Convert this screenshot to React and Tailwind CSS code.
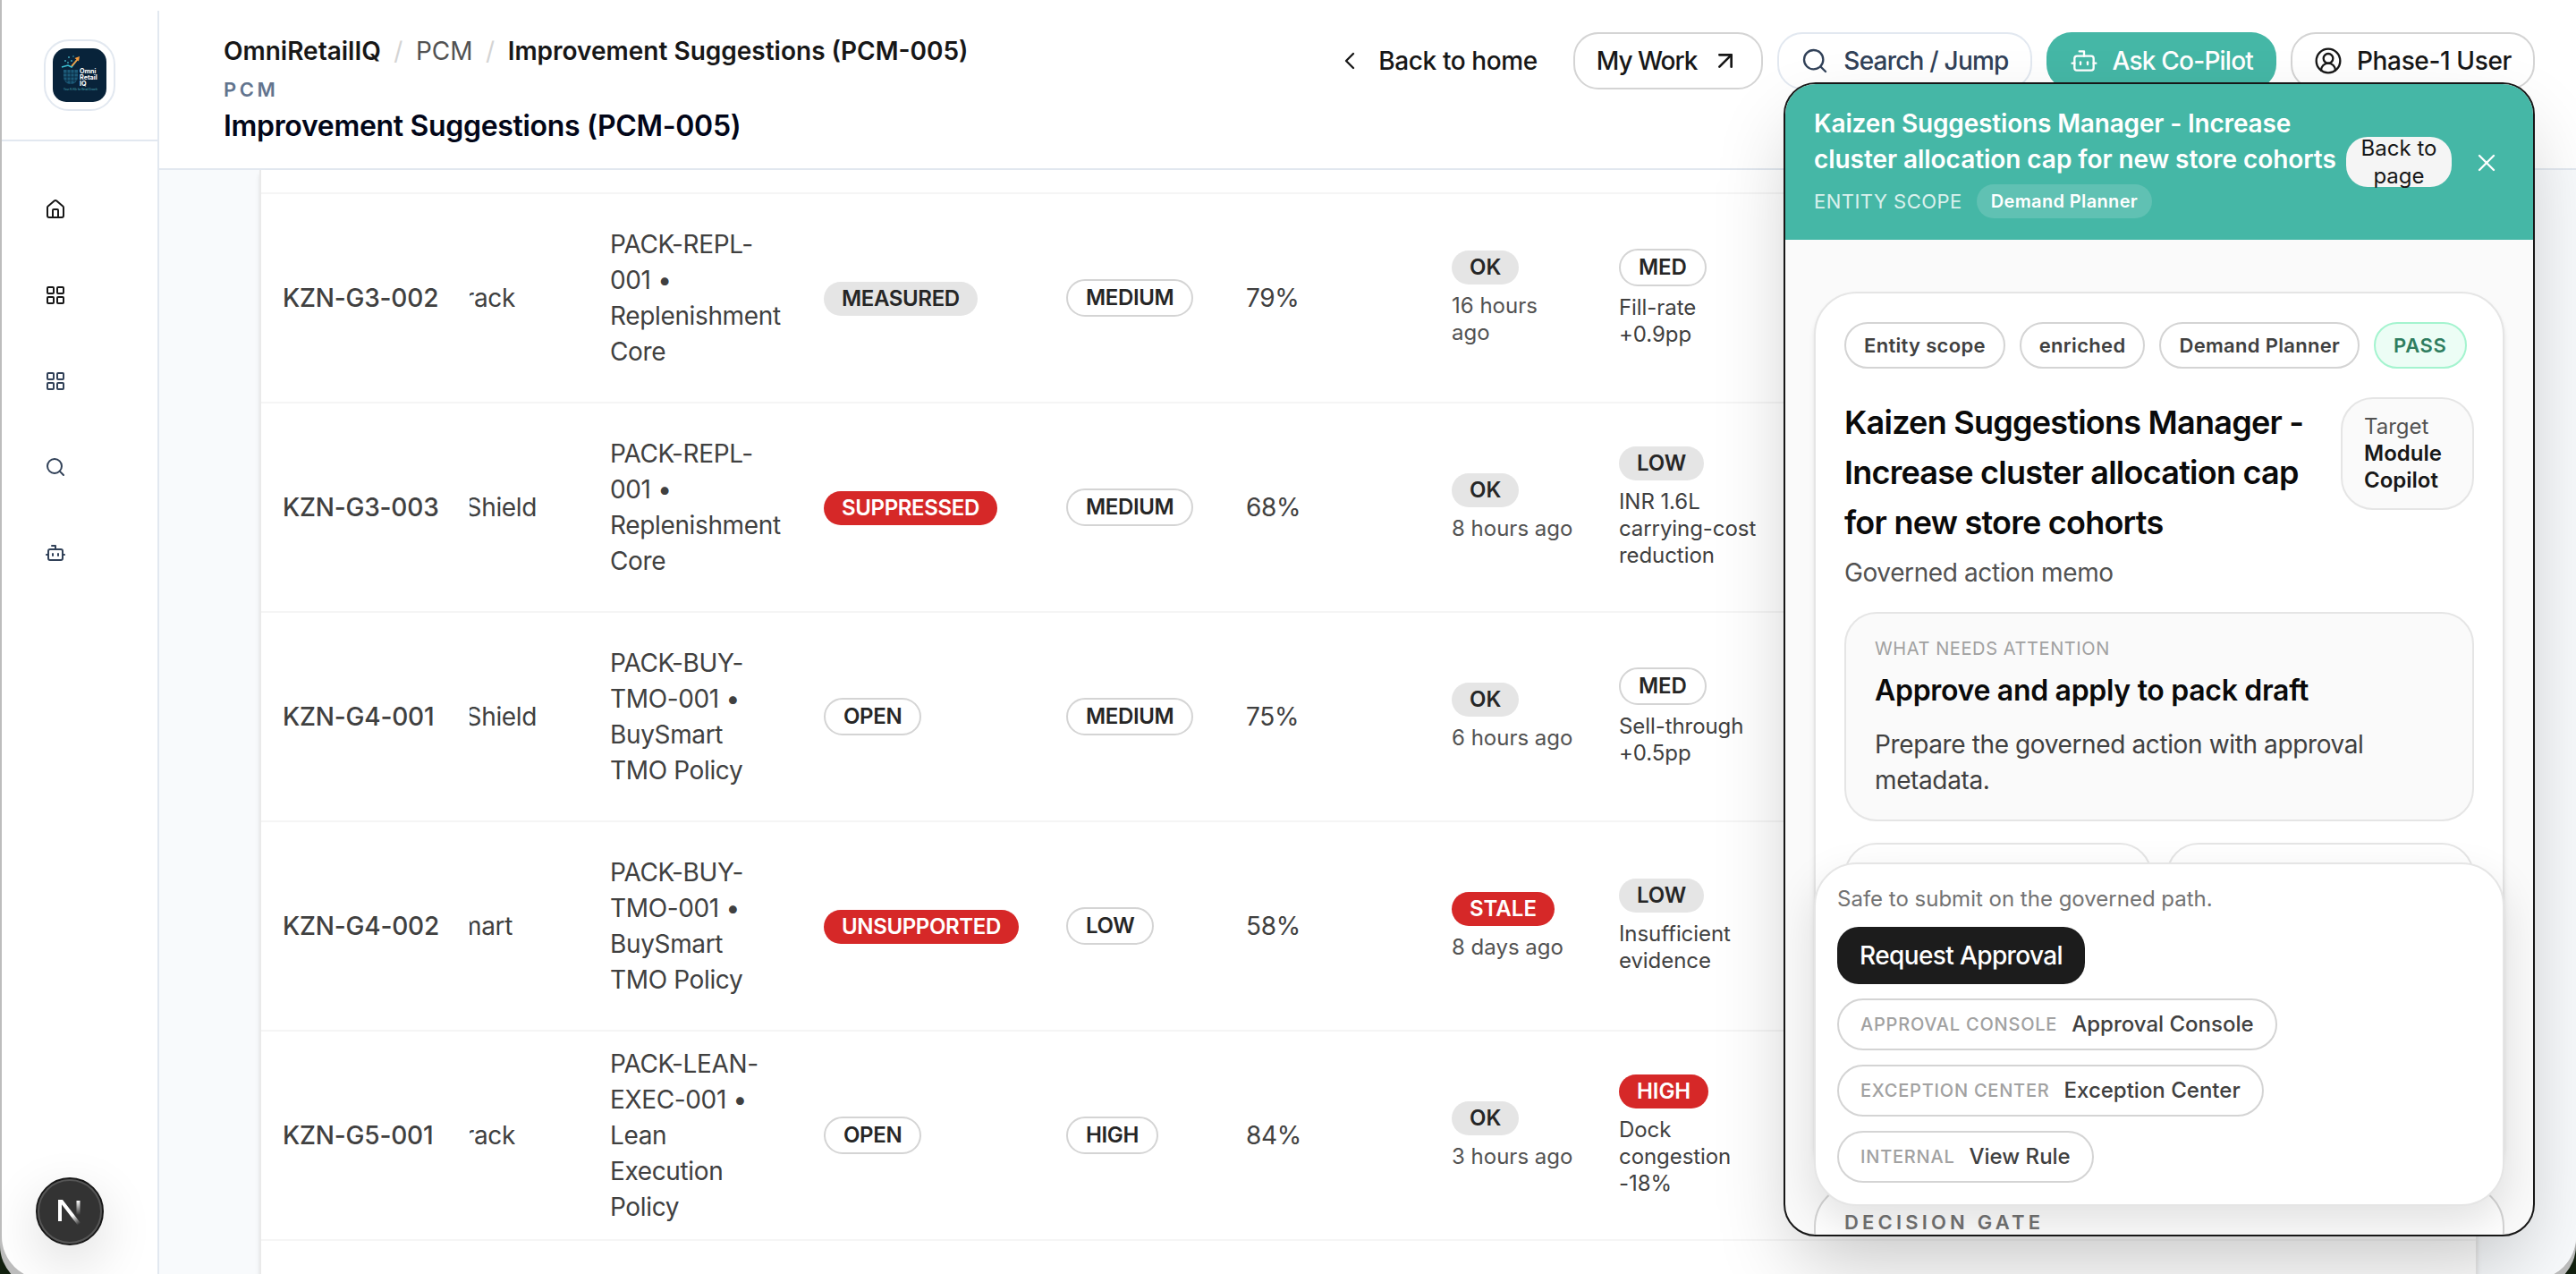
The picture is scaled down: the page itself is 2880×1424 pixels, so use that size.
import { ArrowUpRight, Bot, ChevronLeft, CircleUserRound, House, LayoutGrid, Search, X } from 'lucide-react';

const navItems = [
  { label: 'Home', icon: House, color: 'text-neutral-900' },
  { label: 'Workspace', icon: LayoutGrid, color: 'text-neutral-900' },
  { label: 'Modules', icon: LayoutGrid, color: 'text-slate-700' },
  { label: 'Search', icon: Search, color: 'text-slate-700' },
  { label: 'Copilot', icon: Bot, color: 'text-slate-700' },
];

const rows = [
  {
    id: 'KZN-G3-002',
    agent: 'Track',
    agentWidth: 'w-[51px]',
    pack: ['PACK-REPL-', '001 •', 'Replenishment', 'Core'],
    status: 'MEASURED',
    statusTone: 'muted',
    priority: 'MEDIUM',
    confidence: '79%',
    fresh: 'OK',
    freshTone: 'muted',
    age: ['16 hours', 'ago'],
    impact: 'MED',
    impactTone: 'outline',
    impactText: ['Fill-rate', '+0.9pp'],
  },
  {
    id: 'KZN-G3-003',
    agent: 'Shield',
    agentWidth: 'w-[75px]',
    pack: ['PACK-REPL-', '001 •', 'Replenishment', 'Core'],
    status: 'SUPPRESSED',
    statusTone: 'danger',
    priority: 'MEDIUM',
    confidence: '68%',
    fresh: 'OK',
    freshTone: 'muted',
    age: ['8 hours ago'],
    impact: 'LOW',
    impactTone: 'muted',
    impactText: ['INR 1.6L', 'carrying-cost', 'reduction'],
  },
  {
    id: 'KZN-G4-001',
    agent: 'Shield',
    agentWidth: 'w-[75px]',
    pack: ['PACK-BUY-', 'TMO-001 •', 'BuySmart', 'TMO Policy'],
    status: 'OPEN',
    statusTone: 'outline',
    priority: 'MEDIUM',
    confidence: '75%',
    fresh: 'OK',
    freshTone: 'muted',
    age: ['6 hours ago'],
    impact: 'MED',
    impactTone: 'outline',
    impactText: ['Sell-through', '+0.5pp'],
  },
  {
    id: 'KZN-G4-002',
    agent: 'Smart',
    agentWidth: 'w-[48px]',
    pack: ['PACK-BUY-', 'TMO-001 •', 'BuySmart', 'TMO Policy'],
    status: 'UNSUPPORTED',
    statusTone: 'danger',
    priority: 'LOW',
    confidence: '58%',
    fresh: 'STALE',
    freshTone: 'danger',
    age: ['8 days ago'],
    impact: 'LOW',
    impactTone: 'muted',
    impactText: ['Insufficient', 'evidence'],
  },
  {
    id: 'KZN-G5-001',
    agent: 'Track',
    agentWidth: 'w-[51px]',
    pack: ['PACK-LEAN-', 'EXEC-001 •', 'Lean', 'Execution', 'Policy'],
    status: 'OPEN',
    statusTone: 'outline',
    priority: 'HIGH',
    confidence: '84%',
    fresh: 'OK',
    freshTone: 'muted',
    age: ['3 hours ago'],
    impact: 'HIGH',
    impactTone: 'danger',
    impactText: ['Dock', 'congestion', '-18%'],
  },
];

const links = [
  { kind: 'APPROVAL CONSOLE', name: 'Approval Console' },
  { kind: 'EXCEPTION CENTER', name: 'Exception Center' },
  { kind: 'INTERNAL', name: 'View Rule' },
];

const tones = {
  muted: 'h-[38px] bg-[#e5e5e5] px-5 text-neutral-800',
  danger: 'h-[38px] bg-[#d62828] px-5 text-white',
  outline: 'h-[42px] border-2 border-neutral-300 px-5 text-neutral-800',
};

function Badge({ tone, children }) {
  return (
    <span className={`inline-flex w-fit items-center rounded-full text-[24px] font-semibold leading-none ${tones[tone]}`}>
      {children}
    </span>
  );
}

function Lines({ items }) {
  return items.map((item) => (
    <span key={item} className="block whitespace-nowrap">{item}</span>
  ));
}

function Logo() {
  return (
    <div className="flex h-20 w-20 items-center justify-center rounded-[28px] border-2 border-slate-200 bg-white">
      <svg viewBox="0 0 60 60" className="h-[60px] w-[60px] shrink-0">
        <rect width="60" height="60" rx="15" fill="#08233a" />
        <path d="M12 24v8a8 8 0 0 0 16 0v-8z" fill="#1c5a78" />
        <path d="M12 28h16M12 32h16M13 36h14M16 24v14M20 24v16M24 24v14" stroke="#0b2c44" strokeWidth="1" />
        <path d="M10 21l7-2 4 2 6-8" fill="none" stroke="#3cc3d6" strokeWidth="1.6" />
        <path d="M21 20l7-8" stroke="#f59a3c" strokeWidth="1.8" />
        <path d="M24.500 11l5.500-2-1 5.500z" fill="#f59a3c" />
        <g fill="#3fa9bd">
          <circle cx="14" cy="14" r="1" />
          <circle cx="18" cy="10" r="1" />
          <circle cx="21" cy="14" r="1" />
          <circle cx="17" cy="16" r="0.9" />
          <circle cx="23" cy="9" r="0.8" />
        </g>
        <g fill="#ffffff" fontFamily="Inter, sans-serif" fontSize="7.2" fontWeight="700">
          <text x="30" y="27.5">Omni</text>
          <text x="30" y="34.8">Retail</text>
          <text x="30" y="42.2">IQ</text>
        </g>
        <text x="12" y="47" fill="#4fb0bd" fontFamily="Inter, sans-serif" fontSize="2.9" textLength="38">Your AI Ally for Retail Growth</text>
      </svg>
    </div>
  );
}

function Sidebar() {
  return (
    <aside className="flex w-[176px] shrink-0 flex-col pt-3">
      <div className="flex flex-1 flex-col border-r-2 border-slate-200">
        <div className="flex h-[146px] items-center border-b-2 border-slate-200 pl-[47px]">
          <Logo />
        </div>
        <nav className="flex flex-col gap-[72px] pl-12 pt-16">
          {navItems.map(({ label, icon: Icon, color }) => (
            <a key={label} aria-label={label} className={`h-6 w-6 ${color}`}>
              <Icon size={24} strokeWidth={2} />
            </a>
          ))}
        </nav>
      </div>
    </aside>
  );
}

function Header() {
  return (
    <header className="flex h-[190px] shrink-0 items-start justify-between border-b-2 border-slate-200 bg-white pl-[72px] pr-[46px]">
      <div className="flex flex-col pt-9">
        <div className="flex h-[42px] items-center gap-[14.5px] whitespace-nowrap text-[28px] leading-10">
          <span className="font-semibold text-neutral-900">OmniRetailIQ</span>
          <span className="text-neutral-300">/</span>
          <span className="text-neutral-600">PCM</span>
          <span className="text-neutral-300">/</span>
          <span className="font-semibold text-neutral-900">Improvement Suggestions (PCM-005)</span>
        </div>
        <span className="mt-[6px] text-[22px] font-semibold leading-8 tracking-[0.16em] text-slate-500">PCM</span>
        <h1 className="mt-px text-[32px] font-semibold leading-[48px] tracking-[-0.01em] text-slate-950">
          Improvement Suggestions (PCM-005)
        </h1>
      </div>
      <div className="flex gap-4 whitespace-nowrap pt-9 text-[28px] font-medium">
        <button className="flex h-16 items-center gap-4 pl-[26px] pr-6 tracking-[-0.0145em] text-neutral-900">
          <ChevronLeft size={32} strokeWidth={1.75} />
          Back to home
        </button>
        <button className="flex h-16 items-center gap-4 rounded-[28px] border-2 border-neutral-300 px-6 tracking-[-0.037em] text-neutral-900">
          My Work
          <ArrowUpRight size={32} strokeWidth={2} />
        </button>
        <button className="flex h-16 items-center gap-4 rounded-[28px] border-2 border-slate-200 px-6 tracking-[-0.028em] text-slate-700">
          <Search size={32} strokeWidth={1.75} />
          Search / Jump
        </button>
        <button className="flex h-16 items-center gap-4 rounded-[28px] bg-[#45b7a6] px-[26px] tracking-[-0.028em] text-white">
          <Bot size={32} strokeWidth={1.75} />
          Ask Co-Pilot
        </button>
        <button className="flex h-16 items-center gap-4 rounded-[28px] border-2 border-neutral-300 px-6 tracking-[-0.013em] text-neutral-900">
          <CircleUserRound size={32} strokeWidth={1.75} />
          Phase-1 User
        </button>
      </div>
    </header>
  );
}

function Row({ row }) {
  return (
    <div className="grid h-[234px] shrink-0 grid-cols-[232px_134px_239px_271px_201px_230px_187px_1fr] items-center border-b-2 border-neutral-100 pl-6 text-[28px] leading-10 tracking-[-0.0128em] text-neutral-700">
      <div className="w-[208px] font-medium tracking-[-0.007em]">{row.id}</div>
      <div className="-ml-[23px] h-10">
        <div className={`flex h-10 justify-end overflow-hidden ${row.agentWidth}`}>
          <span>{row.agent}</span>
        </div>
      </div>
      <div><Lines items={row.pack} /></div>
      <div className={row.statusTone === 'outline' ? 'flex' : 'flex pt-[2px]'}>
        <Badge tone={row.statusTone}>{row.status}</Badge>
      </div>
      <div className="flex"><Badge tone="outline">{row.priority}</Badge></div>
      <div>{row.confidence}</div>
      <div className="flex flex-col gap-[9px] text-[24px] leading-[30px] tracking-normal text-neutral-600">
        <Badge tone={row.freshTone}>{row.fresh}</Badge>
        <div><Lines items={row.age} /></div>
      </div>
      <div className="flex flex-col gap-[9px] text-[24px] leading-[30px] tracking-[-0.003em]">
        <Badge tone={row.impactTone}>{row.impact}</Badge>
        <div><Lines items={row.impactText} /></div>
      </div>
    </div>
  );
}

function Pill({ children, className = 'border-neutral-300 tracking-[0.014em] text-neutral-700' }) {
  return (
    <span className={`flex h-[52px] items-center whitespace-nowrap rounded-[26px] border-2 px-5 text-[22px] font-semibold ${className}`}>
      {children}
    </span>
  );
}

function CopilotPanel() {
  return (
    <section className="absolute left-[1994px] top-[92px] flex h-[1290px] w-[840px] flex-col overflow-hidden rounded-[36px] border-2 border-neutral-900 bg-neutral-50 shadow-[0_40px_90px_-16px_rgba(0,0,0,0.24)]">
      <div className="flex h-[174px] shrink-0 items-start bg-[#45b7a6] pl-8 pt-6 text-white">
        <div className="w-[595px] shrink-0">
          <h2 className="whitespace-nowrap text-[28px] font-semibold leading-10">
            <span className="block tracking-[-0.006em]">Kaizen Suggestions Manager - Increase</span>
            <span className="block tracking-[-0.002em]">cluster allocation cap for new store cohorts</span>
          </h2>
          <div className="mt-2 flex items-center gap-4">
            <span className="text-[22px] tracking-[0.022em] text-white/80">ENTITY SCOPE</span>
            <span className="flex h-[38px] items-center rounded-full bg-white/15 px-4 text-[20px] font-semibold tracking-[0.018em]">Demand Planner</span>
          </div>
        </div>
        <button className="mt-[35px] flex h-14 w-[118px] shrink-0 items-center justify-center rounded-[24px] bg-neutral-100 text-center text-[24px] leading-[31px] text-neutral-900">
          Back to
          <br />
          page
        </button>
        <button aria-label="Close" className="ml-[23px] mt-12">
          <X size={32} strokeWidth={1.75} />
        </button>
      </div>

      <div className="flex flex-col px-8 pt-[58px]">
        <div className="h-[1000px] shrink-0 rounded-[48px] border-2 border-neutral-200 bg-white px-8 pt-8 shadow-md">
          <div className="flex gap-4">
            <Pill>Entity scope</Pill>
            <Pill>enriched</Pill>
            <Pill>Demand Planner</Pill>
            <Pill className="border-emerald-200 bg-emerald-50 tracking-[0.03em] text-[#2f7d5f]">PASS</Pill>
          </div>
          <div className="mt-8 flex items-start justify-between">
            <div>
              <h3 className="whitespace-nowrap text-[36px] font-semibold leading-[56px] tracking-[-0.021em] text-neutral-950">
                Kaizen Suggestions Manager -
                <br />
                Increase cluster allocation cap
                <br />
                for new store cohorts
              </h3>
              <p className="mt-2 text-[28px] leading-10 tracking-[-0.014em] text-neutral-600">Governed action memo</p>
            </div>
            <div className="w-[149px] rounded-[36px] border-2 border-neutral-200 bg-neutral-50 px-6 py-4 text-[24px] leading-[30px] text-neutral-600">
              Target
              <div className="font-semibold text-neutral-900">
                Module
                <br />
                Copilot
              </div>
            </div>
          </div>
          <div className="mt-6 h-[234px] rounded-[36px] border-2 border-neutral-200 bg-neutral-50 px-8 py-6">
            <div className="text-[20px] leading-[30px] tracking-[0.03em] text-neutral-400">WHAT NEEDS ATTENTION</div>
            <div className="mt-2 text-[32px] font-semibold leading-[48px] tracking-[-0.0095em] text-neutral-950">
              Approve and apply to pack draft
            </div>
            <p className="mt-4 text-[28px] leading-10 tracking-[-0.0135em] text-neutral-700">
              Prepare the governed action with approval
              <br />
              metadata.
            </p>
          </div>
          <div className="mt-6 grid grid-cols-2 gap-4">
            <div className="h-[160px] rounded-[36px] border-2 border-neutral-200" />
            <div className="h-[160px] rounded-[36px] border-2 border-neutral-200" />
          </div>
        </div>
      </div>

      {/* decision gate card peeks out under the action bar */}
      <div className="absolute left-8 top-[1229px] flex h-[100px] w-[772px] items-start rounded-[48px] border-2 border-neutral-300 bg-white pl-8 pt-[25px]">
        <span className="text-[22px] font-semibold leading-8 tracking-[0.19em] text-neutral-500">DECISION GATE</span>
      </div>

      <div className="absolute left-8 top-[870px] flex h-[384px] w-[772px] flex-col items-start gap-4 rounded-[48px] border-2 border-neutral-200 bg-white px-6 pt-6 shadow-[0_20px_50px_rgba(0,0,0,0.12)]">
        <p className="text-[24px] leading-[30px] text-neutral-500">Safe to submit on the governed path.</p>
        <button className="flex h-16 items-center rounded-[24px] bg-[#1c1c1c] px-[25px] text-[28px] font-medium tracking-[-0.022em] text-white">
          Request Approval
        </button>
        {links.map((link) => (
          <a key={link.kind} className="flex h-[58px] items-center gap-4 rounded-[29px] border-2 border-neutral-300 bg-white px-6 font-medium">
            <span className="text-[20px] tracking-[0.039em] text-neutral-400">{link.kind}</span>
            <span className="text-[24px] text-neutral-700">{link.name}</span>
          </a>
        ))}
      </div>
    </section>
  );
}

function DevBadge() {
  return (
    <div className="absolute left-[40px] top-[1316px] flex h-[76px] w-[76px] items-center justify-center rounded-full border-2 border-neutral-900 bg-[#333] shadow-[0_20px_60px_rgba(0,0,0,0.14)]">
      <div className="flex h-[72px] w-[72px] shrink-0 items-center justify-center rounded-full border-2 border-[#555]">
        <svg viewBox="0 0 48 48" className="h-12 w-12 shrink-0" fill="none">
          <defs>
            <linearGradient id="stem" x1="33.500" y1="12" x2="33.500" y2="28" gradientUnits="userSpaceOnUse">
              <stop stopColor="#fff" />
              <stop offset="1" stopColor="#fff" stopOpacity="0" />
            </linearGradient>
            <linearGradient id="slash" x1="28" y1="28" x2="35" y2="38" gradientUnits="userSpaceOnUse">
              <stop stopColor="#fff" />
              <stop offset="1" stopColor="#fff" stopOpacity="0" />
            </linearGradient>
          </defs>
          <path d="M13 35V13h2l20 26" stroke="url(#slash)" strokeWidth="4" />
          <path d="M33.500 12v16" stroke="url(#stem)" strokeWidth="4" />
        </svg>
      </div>
    </div>
  );
}

export default function App() {
  return (
    <div className="relative h-[1424px] w-[2880px] overflow-hidden bg-[#12200f] font-['Inter',sans-serif]">
      <div className="h-[1440px] rounded-b-[48px] bg-[#bdbdbd]">
        <div className="ml-[2px] flex h-[1430px] overflow-hidden rounded-b-[48px] bg-white">
          <Sidebar />
          <div className="flex min-w-0 flex-1 flex-col bg-slate-50">
            <Header />
            <div className="ml-[112px] flex w-[2480px] flex-1 flex-col overflow-hidden border-x-2 border-neutral-200/80 bg-white pt-[25px] shadow-md">
              <div className="border-t-2 border-neutral-100" />
              {rows.map((row) => (
                <Row key={row.id} row={row} />
              ))}
            </div>
          </div>
        </div>
      </div>
      <CopilotPanel />
      <DevBadge />
    </div>
  );
}
